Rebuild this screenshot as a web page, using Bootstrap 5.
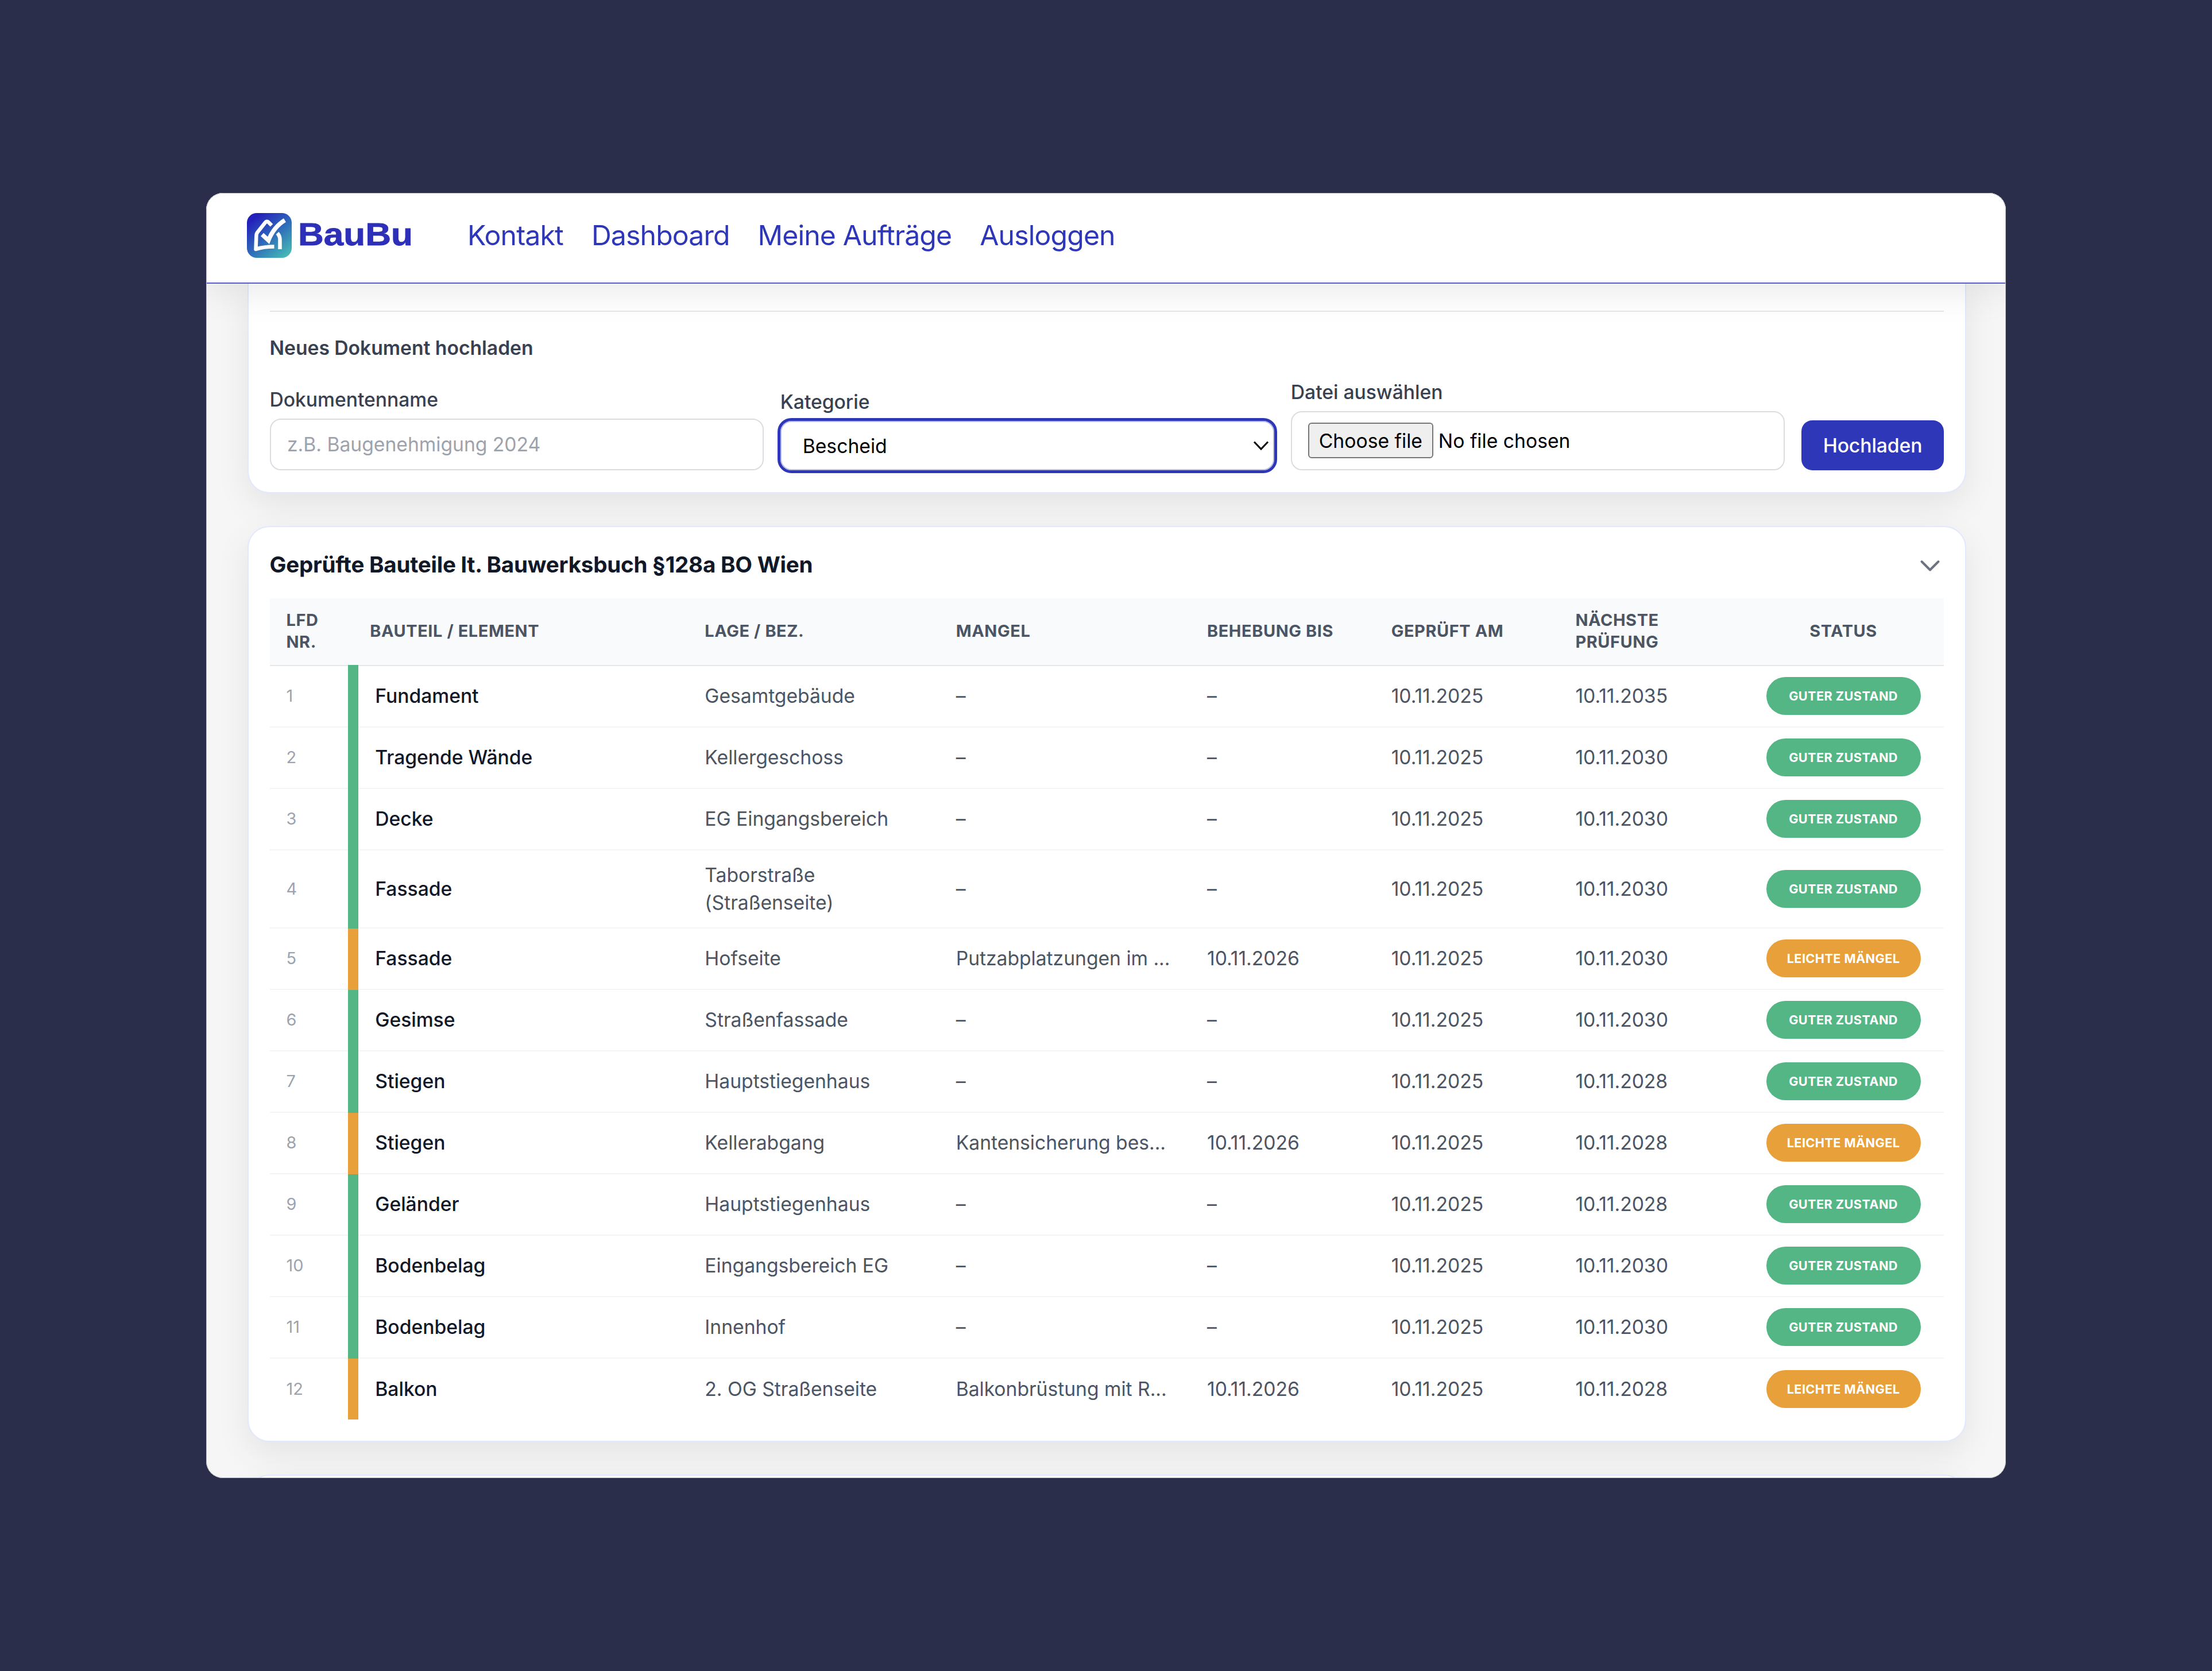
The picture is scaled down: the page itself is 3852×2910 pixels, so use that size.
<!DOCTYPE html>
<html lang="de">
<head>
  <meta charset="UTF-8">
  <meta name="viewport" content="width=device-width, initial-scale=1.0">
  <title>BauBu</title>
  <link href="https://cdn.jsdelivr.net/npm/bootstrap@5.3.0/dist/css/bootstrap.min.css" rel="stylesheet">
  <style>
    body {
      background-color: #2b2e4b;
      font-family: Inter, "Liberation Sans", sans-serif;
      font-size: 33.7px;
      line-height: 48px;
      color: #4b5563;
    }

    .app-window {
      width: 3134px;
      height: 2238px;
      border-radius: 29px;
      background-color: #f6f6f6;
    }

    /* thin frame drawn over header and content */
    .app-window::after {
      content: "";
      position: absolute;
      inset: 0;
      border: 1px solid #bdbdbd;
      border-radius: 29px;
      pointer-events: none;
      z-index: 3;
    }

    /* header */
    .app-header {
      height: 158px;
      padding: 0 71px 9px;
      border-bottom: 2px solid #575ecb;
      background-color: #fff;
      box-shadow: 0 19px 58px rgba(0, 0, 0, .08);
      z-index: 2;
    }

    .logo-mark {
      width: 78px;
      height: 78px;
    }

    .logo-word {
      width: 206px;
      height: 78px;
      margin-left: 9px;
    }

    .logo-word text {
      font-family: "Liberation Sans", sans-serif;
      font-size: 55px;
      font-weight: 700;
      fill: #2d2fb8;
      stroke: #2d2fb8;
      stroke-width: .8px;
    }

    .main-nav {
      margin-left: 91px;
      gap: 49px;
      padding-top: 1px;
    }

    .main-nav a {
      color: #2d37b8;
      font-size: 48.2px;
      line-height: 64px;
      letter-spacing: -.88px;
      text-decoration: none;
    }

    /* panels */
    .app-main {
      padding: 0 69px 0 72px;
    }

    .panel {
      background-color: #fff;
      border: 2px solid #e2e8fd;
      border-radius: 38px;
      padding: 36px 37px 37px 36.5px;
      box-shadow: 0 19px 58px rgba(0, 0, 0, .08);
      margin-bottom: 57px;
      flex: none;
    }

    .panel-upload {
      border-top: 0;
      border-top-left-radius: 0;
      border-top-right-radius: 0;
      padding-top: 47px;
      padding-bottom: 38px;
    }

    .panel-next {
      height: 300px;
    }

    .divider {
      height: 2px;
      background-color: #e5e7eb;
      margin-bottom: 39px;
    }

    .upload-title {
      font-size: 33.7px;
      line-height: 48px;
      font-weight: 600;
      letter-spacing: -.04px;
      color: #374151;
      margin: 0;
    }

    /* upload form */
    .upload-form {
      gap: 29px;
      height: 189px;
    }

    .upload-form label {
      display: block;
      font-weight: 500;
      letter-spacing: -.04px;
      color: #374151;
      margin-bottom: 9px;
    }

    .field {
      border: 2px solid #d9dce1;
      border-radius: 19px;
      font-size: 33.7px;
      line-height: 48px;
      color: #000;
      background: #fff;
      padding: 0 28px;
      width: 100%;
    }

    .field-text {
      height: 90px;
      padding: 0 28.5px 1px;
      letter-spacing: -.03px;
    }

    .field-text::placeholder {
      color: #9ca3af;
      opacity: 1;
    }

    .field-select {
      height: 86px;
      padding: 2px 37px 0;
      border-color: #b9bce4;
      outline: 5px solid #2d37b8;
      appearance: none;
    }

    .select-arrow {
      right: 8px;
      top: 33px;
      width: 30px;
      height: 20px;
    }

    .field-file {
      height: 103px;
      padding: 18px 28px;
    }

    .file-button {
      border: 2px solid #767676;
      border-radius: 6px;
      background-color: #efefef;
      height: 62px;
      line-height: 59px;
      width: 218px;
      margin-right: 9px;
    }

    .btn-upload {
      width: 248px;
      height: 87px;
      border-radius: 19px;
      background-color: #2d37b8;
      color: #fff;
      font-size: 33.7px;
      font-weight: 500;
      letter-spacing: -.1px;
      flex: none;
    }

    /* table */
    .panel-title {
      font-size: 38.6px;
      line-height: 58px;
      font-weight: 700;
      letter-spacing: -.24px;
      color: #111827;
      margin: 0;
    }

    .parts {
      table-layout: fixed;
      width: 100%;
      border-collapse: collapse;
      margin-top: 30px;
    }

    .parts th {
      height: 117px;
      background-color: #f9fafb;
      border-bottom: 2px solid #e5e7eb;
      padding: 0 29px 2px;
      font-size: 28.9px;
      line-height: 38px;
      font-weight: 700;
      letter-spacing: .6px;
      color: #4b5563;
    }

    .parts td {
      height: 107px;
      padding: 0 29px 1px;
      letter-spacing: -.04px;
      border-bottom: 2px solid #f3f4f6;
    }

    .parts .tall td {
      height: 136px;
    }

    .parts tbody tr:last-child td {
      border-bottom: 0;
    }

    .parts .num {
      font-size: 28.9px;
      color: #9ca3af;
    }

    .parts .part {
      border-left: 18px solid #54b685;
      font-weight: 500;
      color: #111827;
    }

    .parts .minor .part {
      border-left-color: #e8a03b;
    }

    .status {
      display: block;
      width: 269px;
      height: 66px;
      line-height: 66px;
      margin: -1px auto 0;
      border-radius: 33px;
      background-color: #54b685;
      color: #fff;
      font-size: 21.7px;
      font-weight: 700;
      letter-spacing: .4px;
      text-align: center;
    }

    .minor .status {
      background-color: #e8a03b;
    }
  </style>
</head>
<body>
  <div class="d-flex align-items-center justify-content-center min-vh-100">
    <div class="app-window d-flex flex-column position-relative overflow-hidden">

      <header class="app-header d-flex align-items-center position-relative flex-shrink-0">
        <svg class="logo-mark" viewBox="0 0 78 78">
          <defs>
            <linearGradient id="logoFill" x1="0.1" y1="0" x2="0.9" y2="1">
              <stop offset="0.1" stop-color="#2420bb"/>
              <stop offset="0.55" stop-color="#2f6fb9"/>
              <stop offset="1" stop-color="#48beb6"/>
            </linearGradient>
          </defs>
          <rect width="78" height="78" rx="17" fill="url(#logoFill)"/>
          <g fill="none" stroke="#fff" stroke-width="6.5" stroke-linejoin="round">
            <path d="M43 21.500L37.500 16C35.500 14 33.500 14.500 31.500 17L18 34Q16.500 36 16.400 39L15.500 63Q29 58.500 47.500 58.500"/>
            <path d="M53 35Q57.500 40 57.500 46V63"/>
            <path d="M26.500 37.500L37.500 47.500Q47 24 66 12.500" stroke-width="7.500" stroke-linejoin="miter"/>
          </g>
        </svg>
        <svg class="logo-word" viewBox="0 0 206 78">
          <text x="2" y="56" textLength="200" lengthAdjust="spacingAndGlyphs">BauBu</text>
        </svg>
        <nav class="main-nav d-flex">
          <a href="#">Kontakt</a>
          <a href="#">Dashboard</a>
          <a href="#">Meine Aufträge</a>
          <a href="#">Ausloggen</a>
        </nav>
      </header>

      <main class="app-main d-flex flex-column">
        <section class="panel panel-upload">
          <div class="divider"></div>
          <h2 class="upload-title">Neues Dokument hochladen</h2>
          <form class="upload-form d-flex align-items-end">
            <div class="flex-fill w-100">
              <label for="docName">Dokumentenname</label>
              <input id="docName" type="text" class="field field-text d-block" placeholder="z.B. Baugenehmigung 2024">
            </div>
            <div class="flex-fill w-100">
              <label for="docCategory">Kategorie</label>
              <div class="position-relative">
                <select id="docCategory" class="field field-select d-block">
                  <option>Bescheid</option>
                </select>
                <svg class="select-arrow position-absolute" viewBox="0 0 30 20">
                  <path d="M3 3.500L15 16L27 3.500" fill="none" stroke="#000" stroke-width="3"/>
                </svg>
              </div>
            </div>
            <div class="flex-fill w-100">
              <label>Datei auswählen</label>
              <div class="field field-file d-flex align-items-start">
                <span class="file-button text-center">Choose file</span>
                <span class="pt-2">No file chosen</span>
              </div>
            </div>
            <button type="button" class="btn-upload border-0 p-0">Hochladen</button>
          </form>
        </section>

        <section class="panel">
          <div class="d-flex justify-content-between align-items-center">
            <h2 class="panel-title">Geprüfte Bauteile lt. Bauwerksbuch §128a BO Wien</h2>
            <svg width="48" height="48" viewBox="0 0 48 48">
              <path d="M9.500 19L24 33.500L38.500 19" fill="none" stroke="#6b7280" stroke-width="4" stroke-linecap="round" stroke-linejoin="round"/>
            </svg>
          </div>
          <table class="parts align-middle">
            <colgroup>
              <col style="width: 5%"><col style="width: 20%"><col style="width: 15%"><col style="width: 15%">
              <col style="width: 11%"><col style="width: 11%"><col style="width: 11%"><col style="width: 12%">
            </colgroup>
            <thead>
              <tr>
                <th>LFD<br>NR.</th>
                <th>BAUTEIL / ELEMENT</th>
                <th>LAGE / BEZ.</th>
                <th>MANGEL</th>
                <th>BEHEBUNG BIS</th>
                <th>GEPRÜFT AM</th>
                <th>NÄCHSTE<br>PRÜFUNG</th>
                <th class="text-center">STATUS</th>
              </tr>
            </thead>
            <tbody id="partRows"></tbody>
          </table>
        </section>

        <section class="panel panel-next"></section>
      </main>
    </div>
  </div>

  <script src="https://cdn.jsdelivr.net/npm/bootstrap@5.3.0/dist/js/bootstrap.bundle.min.js"></script>
  <script>
    const parts = [
      { name: "Fundament", place: "Gesamtgebäude", next: "10.11.2035" },
      { name: "Tragende Wände", place: "Kellergeschoss", next: "10.11.2030" },
      { name: "Decke", place: "EG Eingangsbereich", next: "10.11.2030" },
      { name: "Fassade", place: "Taborstraße<br>(Straßenseite)", next: "10.11.2030", tall: true },
      { name: "Fassade", place: "Hofseite", next: "10.11.2030", defect: "Putzabplatzungen im ..." },
      { name: "Gesimse", place: "Straßenfassade", next: "10.11.2030" },
      { name: "Stiegen", place: "Hauptstiegenhaus", next: "10.11.2028" },
      { name: "Stiegen", place: "Kellerabgang", next: "10.11.2028", defect: "Kantensicherung bes..." },
      { name: "Geländer", place: "Hauptstiegenhaus", next: "10.11.2028" },
      { name: "Bodenbelag", place: "Eingangsbereich EG", next: "10.11.2030" },
      { name: "Bodenbelag", place: "Innenhof", next: "10.11.2030" },
      { name: "Balkon", place: "2. OG Straßenseite", next: "10.11.2028", defect: "Balkonbrüstung mit R..." }
    ];

    document.getElementById('partRows').innerHTML = parts.map((p, i) => `
      <tr class="${p.defect ? 'minor' : ''} ${p.tall ? 'tall' : ''}">
        <td class="num">${i + 1}</td>
        <td class="part">${p.name}</td>
        <td>${p.place}</td>
        <td class="text-nowrap">${p.defect || '–'}</td>
        <td>${p.defect ? '10.11.2026' : '–'}</td>
        <td>10.11.2025</td>
        <td>${p.next}</td>
        <td class="p-0"><span class="status">${p.defect ? 'LEICHTE MÄNGEL' : 'GUTER ZUSTAND'}</span></td>
      </tr>
    `).join('');
  </script>
</body>
</html>
